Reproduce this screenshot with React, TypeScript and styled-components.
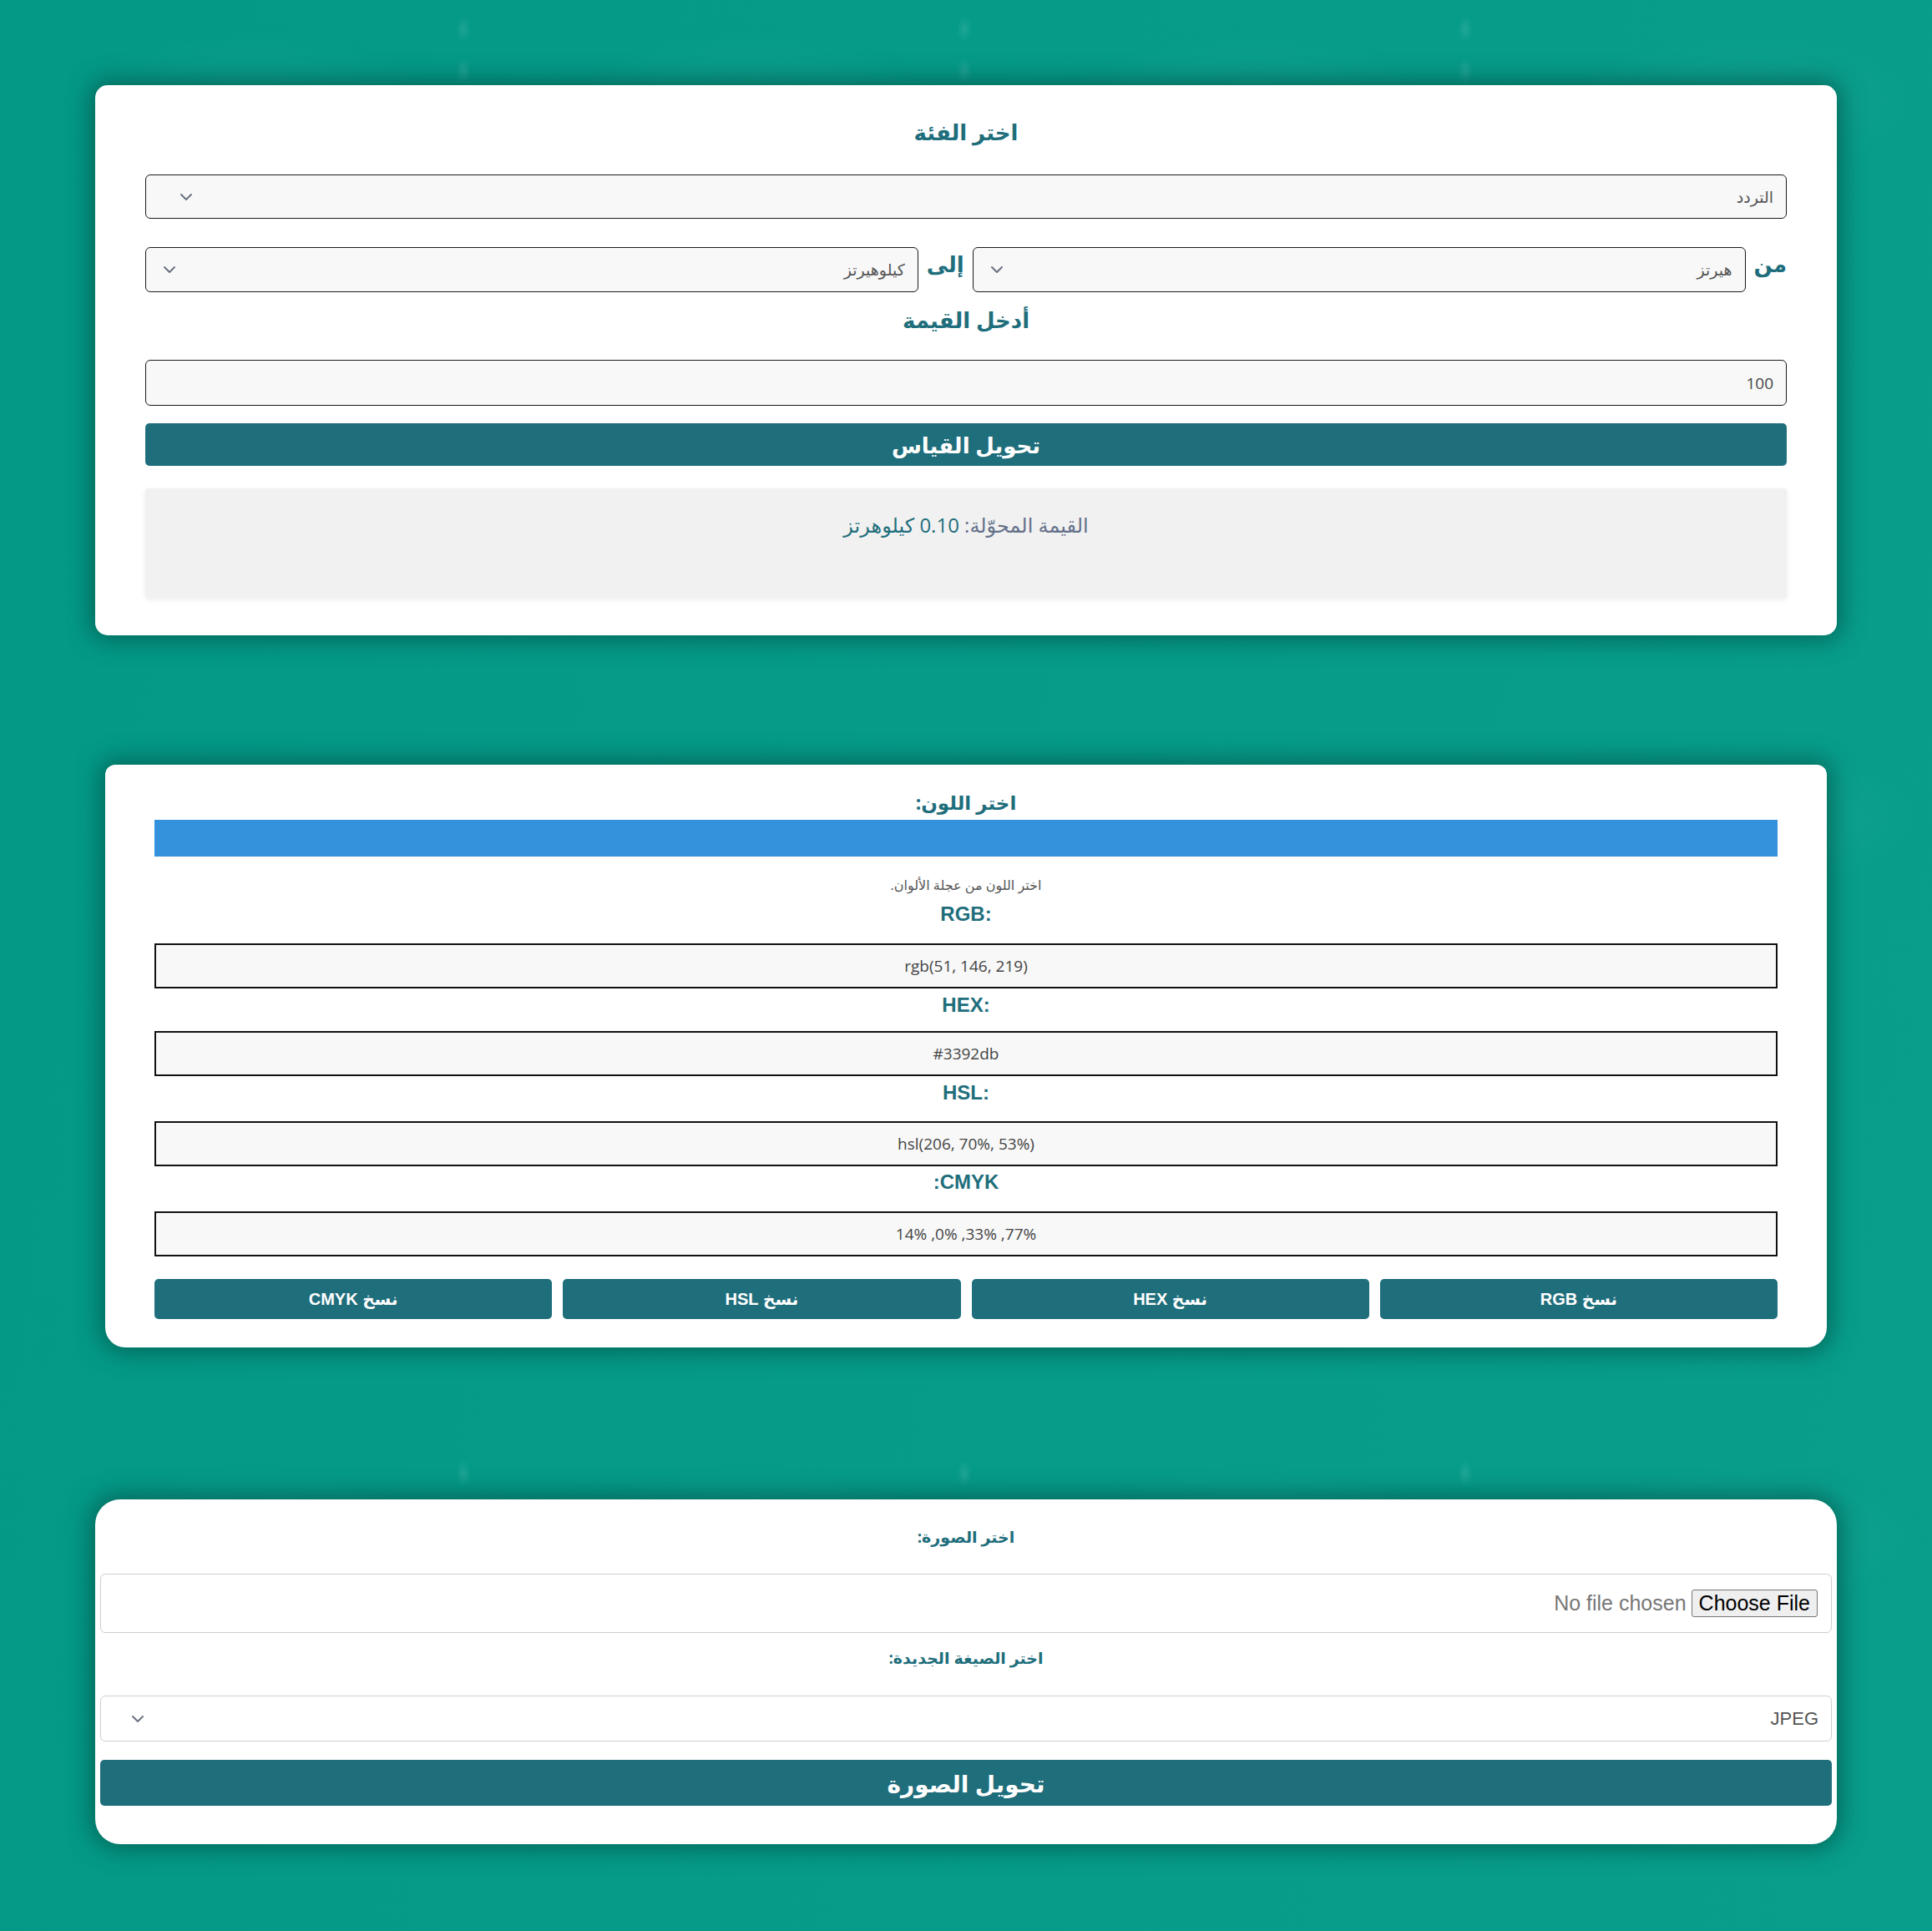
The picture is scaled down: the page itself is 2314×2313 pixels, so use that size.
import React from "react";
import styled, { createGlobalStyle } from "styled-components";

const GlobalStyle = createGlobalStyle`
  html, body {
    margin: 0;
    padding: 0;
    background-color: #039c89;
  }
  body {
    min-height: 2313px;
    font-family: "Open Sans", "DejaVu Sans", sans-serif;
    background-color: #039c89;
    background-image:
      radial-gradient(ellipse 9px 16px at 555px 35px, rgba(255,255,255,0.10), rgba(255,255,255,0) 100%),
      radial-gradient(ellipse 9px 16px at 555px 85px, rgba(255,255,255,0.10), rgba(255,255,255,0) 100%),
      radial-gradient(ellipse 220px 90px at 300px 120px, rgba(255,255,255,0.035), rgba(255,255,255,0) 100%),
      linear-gradient(100deg, rgba(0,0,0,0.02), rgba(255,255,255,0.02));
    background-size: 600px 1730px, 600px 1730px, 600px 860px, 100% 100%;
    background-position: 0 0, 0 0, 0 0, 0 0;
  }
  * { box-sizing: border-box; }
`;

const TEAL = "#1f6e7c";

const Page = styled.div`
  display: flex;
  flex-direction: column;
  align-items: center;
  padding: 102px 0 103px;
`;

const Card = styled.section<{ $w: number; $radius: string; $mt: number; $pad: string }>`
  direction: rtl;
  width: ${(p) => p.$w}px;
  margin-top: ${(p) => p.$mt}px;
  padding: ${(p) => p.$pad};
  background: #ffffff;
  border-radius: ${(p) => p.$radius};
  box-shadow: 0 0 28px 6px rgba(0, 70, 60, 0.6);
  display: flex;
  flex-direction: column;
`;

const Title = styled.h3<{ $size: number; $lh: number; $mb: number }>`
  margin: 0 0 ${(p) => p.$mb}px;
  text-align: center;
  color: ${TEAL};
  font-size: ${(p) => p.$size}px;
  line-height: ${(p) => p.$lh}px;
  font-weight: 700;
`;

const SelectBox = styled.div<{ $h: number; $padL: number; $light?: boolean; $mb?: number; $fixed?: boolean }>`
  display: flex;
  align-items: center;
  justify-content: space-between;
  height: ${(p) => p.$h}px;
  padding: 0 15px 0 ${(p) => p.$padL}px;
  background: ${(p) => (p.$light ? "#ffffff" : "#f8f8f8")};
  border: ${(p) => (p.$light ? "1.5px solid #cfcfcf" : "1.5px solid #1a1a1a")};
  border-radius: 6px;
  color: #555;
  font-size: 19px;
  margin-bottom: ${(p) => p.$mb ?? 0}px;
  flex: ${(p) => (p.$fixed ? "none" : "1")};
`;

const SelectText = styled.span<{ $latin?: boolean }>`
  font-family: ${(p) => (p.$latin ? '"Liberation Sans", Arial, sans-serif' : '"Open Sans", "DejaVu Sans", sans-serif')};
  font-size: ${(p) => (p.$latin ? 22 : 19)}px;
  color: #555;
`;

const Chevron = () => (
  <svg width="16" height="10" viewBox="0 0 16 10" fill="none">
    <path d="M2 2 L8 8 L14 2" stroke="#6b7280" strokeWidth="2" strokeLinecap="round" strokeLinejoin="round" />
  </svg>
);

const Row = styled.div`
  display: flex;
  align-items: flex-start;
  gap: 10px;
  height: 54px;
  margin-bottom: 15px;
`;

const RowLabel = styled.span`
  color: ${TEAL};
  font-size: 26px;
  line-height: 40px;
  font-weight: 600;
`;

const ValueInput = styled.div`
  display: flex;
  align-items: center;
  height: 55px;
  padding: 0 15px;
  background: #f8f8f8;
  border: 1.5px solid #1a1a1a;
  border-radius: 6px;
  color: #444;
  font-size: 19px;
  margin-bottom: 21px;
`;

const MainButton = styled.button<{ $h: number; $size: number; $mb: number }>`
  display: block;
  width: 100%;
  height: ${(p) => p.$h}px;
  margin: 0 0 ${(p) => p.$mb}px;
  border: none;
  border-radius: 5px;
  background: ${TEAL};
  color: #ffffff;
  font-family: "Open Sans", "DejaVu Sans", sans-serif;
  font-size: ${(p) => p.$size}px;
  font-weight: 700;
  cursor: pointer;
`;

const ResultBox = styled.div`
  height: 131px;
  padding-top: 27px;
  background: #f1f1f1;
  border-radius: 4px;
  box-shadow: 0 2px 6px rgba(0, 0, 0, 0.08);
  text-align: center;
  font-size: 24px;
  line-height: 34px;
  color: #64708a;
`;

const ResultValue = styled.span`
  color: ${TEAL};
`;

const ColorBar = styled.div<{ $color: string }>`
  height: 44px;
  background: ${(p) => p.$color};
  margin-bottom: 22px;
`;

const Hint = styled.p`
  margin: 0 0 8px;
  text-align: center;
  font-size: 16px;
  line-height: 24px;
  color: #555;
`;

const FieldLabel = styled.div<{ $mb: number }>`
  text-align: center;
  font-family: "Liberation Sans", Arial, sans-serif;
  font-weight: 700;
  font-size: 24px;
  line-height: 30px;
  color: ${TEAL};
  margin-bottom: ${(p) => p.$mb}px;
`;

const FieldLabelText = styled.span`
  unicode-bidi: isolate;
`;

const ColorValue = styled.div<{ $mb: number }>`
  display: flex;
  align-items: center;
  justify-content: center;
  height: 54px;
  background: #f8f8f8;
  border: 2px solid #111;
  color: #444;
  font-size: 19px;
  margin-bottom: ${(p) => p.$mb}px;
`;

const CopyRow = styled.div`
  display: grid;
  grid-template-columns: repeat(4, 1fr);
  gap: 13px;
  margin-top: 7px;
`;

const CopyButton = styled.button`
  height: 48px;
  border: none;
  border-radius: 5px;
  background: ${TEAL};
  color: #fff;
  font-family: "Liberation Sans", "DejaVu Sans", Arial, sans-serif;
  font-weight: 700;
  font-size: 20px;
  cursor: pointer;
`;

const FileBox = styled.div`
  display: flex;
  align-items: center;
  height: 71px;
  padding: 0 16px;
  border: 1.5px solid #cfcfcf;
  border-radius: 6px;
  background: #fff;
  margin-bottom: 16px;
`;

const FileInput = styled.input`
  font-family: "Liberation Sans", Arial, sans-serif;
  font-size: 25px;
  color: #777;
  direction: rtl;
  &::file-selector-button {
    font-family: "Liberation Sans", Arial, sans-serif;
    font-size: 25px;
    color: #000;
    background: #efefef;
    border: 1.5px solid #767676;
    border-radius: 3px;
    padding: 1px 8px;
    margin: 0 0 0 6px;
  }
`;

const Stack = styled.div`
  display: flex;
  flex-direction: column;
`;

export default function App() {
  return (
    <>
      <GlobalStyle />
      <Page>
        <Card $w={2086} $radius="15px" $mt={0} $pad="38px 60px 45px">
          <Title $size={26} $lh={36} $mb={33}>اختر الفئة</Title>
          <SelectBox $h={53} $padL={40} $mb={34} $fixed>
            <SelectText>التردد</SelectText>
            <Chevron />
          </SelectBox>
          <Row>
            <RowLabel>من</RowLabel>
            <SelectBox $h={54} $padL={20}>
              <SelectText>هيرتز</SelectText>
              <Chevron />
            </SelectBox>
            <RowLabel>إلى</RowLabel>
            <SelectBox $h={54} $padL={20}>
              <SelectText>كيلوهيرتز</SelectText>
              <Chevron />
            </SelectBox>
          </Row>
          <Title $size={26} $lh={36} $mb={30}>أدخل القيمة</Title>
          <ValueInput>100</ValueInput>
          <MainButton $h={51} $size={26} $mb={27}>تحويل القياس</MainButton>
          <ResultBox>
            القيمة المحوّلة: <ResultValue>0.10 كيلوهرتز</ResultValue>
          </ResultBox>
        </Card>

        <Card $w={2062} $radius="12px 12px 24px 24px" $mt={155} $pad="30px 59px 34px">
          <Title $size={23} $lh={30} $mb={6}>اختر اللون:</Title>
          <ColorBar $color="#3392db" />
          <Hint>اختر اللون من عجلة الألوان.</Hint>
          <FieldLabel $mb={20}><FieldLabelText dir="ltr">RGB:</FieldLabelText></FieldLabel>
          <ColorValue $mb={5} dir="ltr">rgb(51, 146, 219)</ColorValue>
          <FieldLabel $mb={16}><FieldLabelText dir="ltr">HEX:</FieldLabelText></FieldLabel>
          <ColorValue $mb={5} dir="ltr">#3392db</ColorValue>
          <FieldLabel $mb={19}><FieldLabelText dir="ltr">HSL:</FieldLabelText></FieldLabel>
          <ColorValue $mb={4} dir="ltr">hsl(206, 70%, 53%)</ColorValue>
          <FieldLabel $mb={20}>CMYK:</FieldLabel>
          <ColorValue $mb={20}>77%, 33%, 0%, 14%</ColorValue>
          <CopyRow>
            <CopyButton>نسخ RGB</CopyButton>
            <CopyButton>نسخ HEX</CopyButton>
            <CopyButton>نسخ HSL</CopyButton>
            <CopyButton>نسخ CMYK</CopyButton>
          </CopyRow>
        </Card>

        <Card $w={2086} $radius="30px" $mt={182} $pad="31px 6px 46px">
          <Stack>
            <Title $size={19} $lh={28} $mb={30}>اختر الصورة:</Title>
            <FileBox>
              <FileInput type="file" />
            </FileBox>
            <Title $size={19} $lh={28} $mb={31}>اختر الصيغة الجديدة:</Title>
            <SelectBox $h={55} $padL={36} $light $mb={22} $fixed>
              <SelectText $latin>JPEG</SelectText>
              <Chevron />
            </SelectBox>
            <MainButton $h={55} $size={28} $mb={0}>تحويل الصورة</MainButton>
          </Stack>
        </Card>
      </Page>
    </>
  );
}
